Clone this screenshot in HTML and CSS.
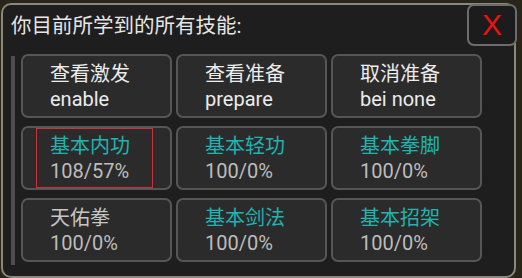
FILE: index.html
```html
<!DOCTYPE html>
<html lang="zh">
<head>
<meta charset="utf-8">
<title>技能</title>
<link rel="stylesheet" href="styles.css">
</head>
<body>
<div class="panel">
  <div class="title">你目前所学到的所有技能:</div>
  <button class="close" type="button">X</button>
  <div class="content">
    <div class="scrollbar"></div>
    <div class="grid">
      <div class="cell"><span class="name white">查看激发</span><span class="sub white">enable</span></div>
      <div class="cell"><span class="name white">查看准备</span><span class="sub white">prepare</span></div>
      <div class="cell"><span class="name white">取消准备</span><span class="sub white">bei none</span></div>
      <div class="cell"><span class="name teal">基本内功</span><span class="sub">108/57%</span><span class="focus"></span></div>
      <div class="cell"><span class="name teal">基本轻功</span><span class="sub">100/0%</span></div>
      <div class="cell"><span class="name teal">基本拳脚</span><span class="sub">100/0%</span></div>
      <div class="cell"><span class="name gray">天佑拳</span><span class="sub">100/0%</span></div>
      <div class="cell"><span class="name teal">基本剑法</span><span class="sub">100/0%</span></div>
      <div class="cell"><span class="name teal">基本招架</span><span class="sub">100/0%</span></div>
    </div>
  </div>
</div>
</body>
</html>
```

FILE: styles.css
```css
html, body {
  margin: 0;
  padding: 0;
  width: 522px;
  height: 278px;
  overflow: hidden;
  background: #2a251a;
  font-family: Roboto, "Noto Sans CJK SC", sans-serif;
}

.panel {
  position: relative;
  box-sizing: border-box;
  margin: 3px 6px 0 1px;
  height: 275px;
  border: 2px solid #8a8877;
  border-radius: 10px;
  background: #1e1e1e;
  padding: 6px 0 0 8px;
}

.title {
  height: 30px;
  line-height: 30px;
  font-size: 20.5px;
  color: #e6e6e6;
}

.close {
  position: absolute;
  top: -1px;
  right: -3px;
  box-sizing: border-box;
  width: 50px;
  height: 42px;
  margin: 0;
  padding: 0;
  border: 2px solid #6c6c6c;
  border-radius: 7px;
  background: #1c1c1c;
  color: #ee1111;
  font-family: "Liberation Sans", Arial, sans-serif;
  font-size: 30px;
  line-height: 38px;
  text-align: center;
}

.content {
  display: flex;
  gap: 6px;
  margin-top: 13px;
}

.scrollbar {
  width: 4px;
  height: 209px;
  margin-top: 2px;
  background: #4e4e4e;
}

.grid {
  display: grid;
  grid-template-columns: repeat(3, 151px);
  grid-auto-rows: 64px;
  column-gap: 4px;
  row-gap: 8px;
}

.cell {
  position: relative;
  box-sizing: border-box;
  display: flex;
  flex-direction: column;
  justify-content: center;
  padding: 2px 0 0 27px;
  border: 2px solid #565656;
  border-radius: 7px;
  background: #2b2b2b;
}

.name, .sub {
  display: block;
  font-size: 20px;
  line-height: 25px;
  white-space: nowrap;
}

.sub {
  color: #bdbdbd;
}

.white { color: #ececec; }
.teal { color: #1fb4b1; }
.gray { color: #c6c6c6; }

.focus {
  position: absolute;
  left: 13px;
  top: 0;
  width: 117px;
  height: 60px;
  box-sizing: border-box;
  border: 1px solid #c8323c;
  pointer-events: none;
}
```
